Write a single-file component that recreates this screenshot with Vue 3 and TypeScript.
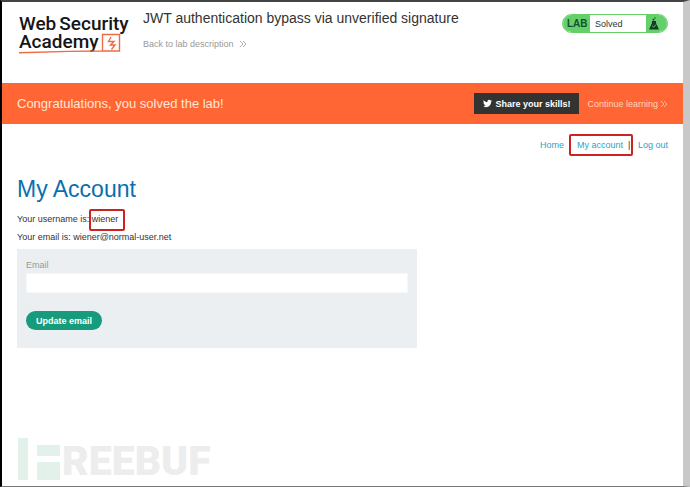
<script setup lang="ts">
import { ref } from 'vue'

const username = 'wiener'
const address = 'wiener@normal-user.net'
const email = ref('')
</script>

<template>
  <div class="page">
    <header class="lab-header">
      <a class="logo" href="#" aria-label="Web Security Academy">
        <span class="logo-line"><span>Web</span><span>Security</span></span>
        <span class="logo-line">Academy</span>
        <svg class="logo-mark" viewBox="0 0 110 40" aria-hidden="true">
          <path d="M0 37.8 L50 36.4 L83 36 H100.500 V19.500 H83.500 V36" />
          <path d="M92 22 L89.500 26.500 L95 26.500 L91.500 30 H96 L92.500 34.500" />
        </svg>
      </a>
      <div class="titles">
        <h2>JWT authentication bypass via unverified signature</h2>
        <a class="back" href="#">
          Back to lab description
          <svg class="chevrons" viewBox="0 0 8 8" aria-hidden="true"><path d="M1 1 L4 4 L1 7 M4 1 L7 4 L4 7" /></svg>
        </a>
      </div>
      <div class="status">
        <span class="status-lab">LAB</span>
        <span class="status-text">Solved</span>
        <span class="status-icon">
          <svg viewBox="0 0 12 14" aria-hidden="true">
            <path d="M4 4 H8 V6 L11 12.500 H1 L4 6 Z" fill="#17382b" />
            <circle cx="5.500" cy="2.700" r="0.900" fill="#17382b" />
            <circle cx="7" cy="1" r="0.700" fill="#17382b" />
            <path d="M4.200 8.800 L5.600 10.200 L8 7.500" fill="none" stroke="#63d06b" />
          </svg>
        </span>
      </div>
    </header>

    <section class="banner">
      <p>Congratulations, you solved the lab!</p>
      <button class="share" type="button">
        <svg viewBox="0 0 24 24" aria-hidden="true">
          <path d="M23.950 4.570a10 10 0 0 1-2.820.770 4.960 4.960 0 0 0 2.160-2.720 9.900 9.900 0 0 1-3.120 1.190 4.920 4.920 0 0 0-8.380 4.480C7.690 8.100 4.070 6.130 1.640 3.160a4.820 4.820 0 0 0-.670 2.480c0 1.710.870 3.210 2.190 4.100a4.900 4.900 0 0 1-2.230-.620v.060a4.920 4.920 0 0 0 3.950 4.830 5 5 0 0 1-2.210.080 4.940 4.940 0 0 0 4.600 3.420A9.870 9.870 0 0 1 0 19.540a14 14 0 0 0 7.550 2.210c9.050 0 14-7.500 14-13.980 0-.210 0-.420-.020-.630a9.940 9.940 0 0 0 2.460-2.550z" />
        </svg>
        Share your skills!
      </button>
      <a class="continue" href="#">
        Continue learning
        <svg class="chevrons" viewBox="0 0 8 8" aria-hidden="true"><path d="M1 1 L4 4 L1 7 M4 1 L7 4 L4 7" /></svg>
      </a>
    </section>

    <main>
      <nav>
        <a href="#">Home</a>
        <span class="marked"><a href="#">My account</a><span class="divider">|</span></span>
        <a href="#">Log out</a>
      </nav>
      <h1>My Account</h1>
      <p>Your username is: <span class="username">{{ username }}</span></p>
      <p>Your email is: {{ address }}</p>
      <form @submit.prevent>
        <label for="email">Email</label>
        <input id="email" v-model="email" type="email" />
        <button type="submit">Update email</button>
      </form>
    </main>

    <footer class="watermark">
      <svg viewBox="0 0 42 42" aria-hidden="true"><path d="M0 0 H10 V42 H0 Z M19 7 H42 V18 H19 Z M19 24 H42 V42 H19 Z" /></svg>
      <span>REEBUF</span>
    </footer>
  </div>
</template>

<style>
body {
  margin: 0;
}
</style>

<style scoped>
* {
  box-sizing: border-box;
}

.page {
  display: flex;
  flex-direction: column;
  min-height: 100vh;
  border: solid;
  border-width: 2px 7px 1px 2px;
  border-color: #444 #c8c8c8 #777 #000;
  background: #fff;
  color: #333;
  font: 9px/12px "Liberation Sans", Arial, sans-serif;
}

a {
  text-decoration: none;
}

p,
h1,
h2 {
  margin: 0;
  font-weight: 400;
}

.lab-header {
  display: flex;
  align-items: flex-start;
  height: 81px;
  padding: 8px 15px 0 17px;
}

.logo {
  position: relative;
  width: 124px;
  padding-top: 5px;
  color: #161616;
  font: 500 19px/18px Roboto, sans-serif;
}

.logo-line {
  display: flex;
  gap: 3px;
}

.logo-mark {
  position: absolute;
  top: 5px;
  left: 0;
  width: 110px;
  height: 40px;
  fill: none;
  stroke: #ee6b45;
  stroke-width: 1.4;
}

.titles {
  flex: 1;
}

h2 {
  font-size: 14px;
  line-height: 16px;
}

.back {
  display: flex;
  align-items: center;
  gap: 5px;
  margin-top: 12px;
  color: #999;
}

.chevrons {
  width: 8px;
  height: 8px;
  fill: none;
  stroke: currentColor;
  stroke-width: 0.8;
}

.status {
  display: flex;
  height: 19px;
  margin-top: 4px;
  overflow: hidden;
  border: 1px solid #63d06b;
  border-radius: 10px;
  line-height: 18px;
}

.status-lab {
  width: 27px;
  padding-left: 4px;
  background: #63d06b;
  color: #17502b;
  font-size: 10px;
  font-weight: 700;
}

.status-text {
  width: 56px;
  padding-left: 5px;
}

.status-icon {
  display: flex;
  align-items: center;
  width: 21px;
  padding-left: 2px;
  background: #63d06b;
}

.status-icon svg {
  width: 12px;
  height: 14px;
}

.banner {
  display: flex;
  align-items: center;
  height: 41px;
  padding: 0 15px;
  background: #ff6633;
  color: #ffe6d8;
}

.banner p {
  flex: 1;
  font-size: 13px;
  line-height: 16px;
}

.share {
  display: flex;
  align-items: center;
  gap: 3px;
  height: 21px;
  padding: 0 9px;
  border: 0;
  background: #333332;
  color: #fff;
  font: 700 9px/12px "Liberation Sans", Arial, sans-serif;
}

.share svg {
  width: 9px;
  height: 9px;
  fill: #fff;
}

.continue {
  display: flex;
  align-items: center;
  gap: 2px;
  margin-left: 8px;
  color: #ffd2bd;
}

main {
  flex: 1;
  padding: 10px 15px 0;
}

nav {
  display: flex;
  justify-content: flex-end;
  align-items: center;
  gap: 5px;
}

nav a {
  color: #29a5c9;
}

.marked {
  display: flex;
  align-items: center;
  justify-content: space-between;
  width: 64px;
  height: 22px;
  padding-left: 6px;
  border: 2px solid #cc2222;
  border-radius: 2px;
}

.divider {
  width: 3px;
}

h1 {
  margin: 19px 0 10px;
  color: #0b6fad;
  font-size: 23px;
  line-height: 28px;
}

main p {
  margin-bottom: 6px;
}

.username {
  position: relative;
}

.username::after {
  content: "";
  position: absolute;
  inset: -5px -7px -7px -3px;
  border: 2px solid #cc2222;
  border-radius: 2px;
}

form {
  display: flex;
  flex-direction: column;
  align-items: flex-start;
  width: 100%;
  max-width: 400px;
  padding: 10px 9px 18px;
  background: #ebeff2;
}

label {
  color: #999;
}

input {
  width: 100%;
  height: 20px;
  margin: 2px 0 18px;
  padding: 0 4px;
  border: 1px solid #f5f7f8;
  background: #fff;
  font: inherit;
}

form button {
  height: 19px;
  padding: 0 10px;
  border: 0;
  border-radius: 10px;
  background: #169b7c;
  color: #fff;
  font: 700 9px/12px "Liberation Sans", Arial, sans-serif;
}

.watermark {
  display: flex;
  align-items: flex-end;
  gap: 2px;
  padding: 0 16px 6px;
  color: #ededed;
  font: 900 41px/38px Roboto, sans-serif;
}

.watermark svg {
  width: 42px;
  height: 42px;
  fill: #e2f2ea;
}
</style>
